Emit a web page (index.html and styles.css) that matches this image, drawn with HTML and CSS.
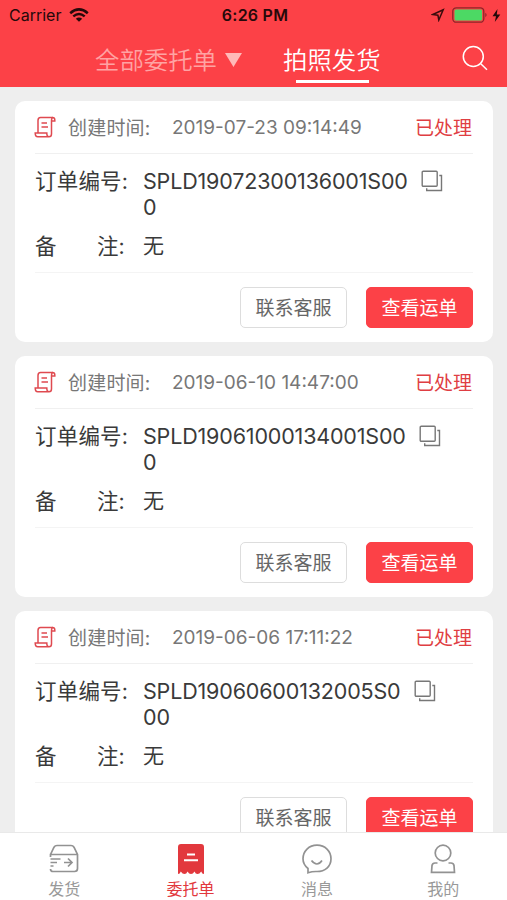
FILE: index.html
```html
<!DOCTYPE html>
<html lang="zh-CN">
<head>
<meta charset="utf-8">
<title>拍照发货</title>
<link rel="stylesheet" href="styles.css">
</head>
<body>
<svg class="defs" width="0" height="0" aria-hidden="true">
  <symbol id="scroll" viewBox="0 0 22 22"><path d="M4 16.500V4.500Q4 1.500 6.500 1.500H18.500Q20.800 1.500 20.800 3.800V5H17.500V18Q17.500 20.800 15 20.800H3.800Q1.200 20.800 1.200 17H12.800Q12.800 20.800 15 20.800M17.500 5Q17.500 1.500 19 1.500M7.500 7H13M7.500 11H14"/></symbol>
  <symbol id="copy" viewBox="0 0 22 22"><rect x="1.200" y="1.200" width="15" height="15" rx="1"/><path d="M18.300 5.500H20.500V20.500H5.700V18.300"/></symbol>
</svg>
<div class="app">
  <header class="top">
    <div class="status">
      <div class="status-left"><span class="carrier">Carrier</span>
        <svg width="20" height="14" viewBox="0 0 20 14"><path d="M1.200 5.200Q10-2.500 18.800 5.200M4.300 8.400Q10 3.600 15.700 8.400" fill="none" stroke="#26090a" stroke-width="2.500"/><path d="M6.800 10.700Q10 8.200 13.200 10.700L10 13.700Z" fill="#26090a"/></svg>
      </div>
      <span class="clock">6:26 PM</span>
      <div class="status-right">
        <svg width="14" height="14" viewBox="0 0 14 14"><path d="M1.800 6.500L12.200 1.800L7.800 12L6.900 7.200Z" fill="none" stroke="#3a0b0c" stroke-width="1.500"/></svg>
        <svg width="36" height="16" viewBox="0 0 36 16"><rect x=".8" y=".8" width="31" height="14.400" rx="3.500" fill="none" stroke="#8d2628" stroke-width="1.300"/><rect x="2.500" y="2.500" width="27.600" height="11" rx="1.500" fill="#4cd964"/><path d="M33.300 5.800Q36 8 33.300 10.200Z" fill="#8d2628"/></svg>
        <svg width="9" height="13" viewBox="0 0 9 13"><path d="M5.500 0L.5 7.200H4L2.800 13L8.300 5.400H4.800Z" fill="#26090a"/></svg>
      </div>
    </div>
    <nav class="nav">
      <span class="nav-item muted">全部委托单<i class="caret"></i></span>
      <span class="nav-item active">拍照发货</span>
      <svg class="search" width="26" height="26" viewBox="0 0 26 26"><circle cx="11.300" cy="11.500" r="10"/><path d="M18.500 18.500L25 24.700"/></svg>
    </nav>
  </header>
  <main class="list">
    <article class="card">
      <div class="card-head"><svg class="scroll"><use href="#scroll"/></svg><span class="created">创建时间:</span><time>2019-07-23 09:14:49</time><b class="state">已处理</b></div>
      <div class="card-body">
        <div class="row order"><span class="label">订单编号:</span><span class="num">SPLD19072300136001S00<br>0</span><svg class="copy"><use href="#copy"/></svg></div>
        <div class="row"><span class="label split"><span>备</span><span>注:</span></span><span class="value">无</span></div>
      </div>
      <div class="actions"><button class="btn">联系客服</button><button class="btn primary">查看运单</button></div>
    </article>
    <article class="card">
      <div class="card-head"><svg class="scroll"><use href="#scroll"/></svg><span class="created">创建时间:</span><time>2019-06-10 14:47:00</time><b class="state">已处理</b></div>
      <div class="card-body">
        <div class="row order"><span class="label">订单编号:</span><span class="num">SPLD19061000134001S00<br>0</span><svg class="copy"><use href="#copy"/></svg></div>
        <div class="row"><span class="label split"><span>备</span><span>注:</span></span><span class="value">无</span></div>
      </div>
      <div class="actions"><button class="btn">联系客服</button><button class="btn primary">查看运单</button></div>
    </article>
    <article class="card">
      <div class="card-head"><svg class="scroll"><use href="#scroll"/></svg><span class="created">创建时间:</span><time>2019-06-06 17:11:22</time><b class="state">已处理</b></div>
      <div class="card-body">
        <div class="row order"><span class="label">订单编号:</span><span class="num">SPLD19060600132005S0<br>00</span><svg class="copy"><use href="#copy"/></svg></div>
        <div class="row"><span class="label split"><span>备</span><span>注:</span></span><span class="value">无</span></div>
      </div>
      <div class="actions"><button class="btn">联系客服</button><button class="btn primary">查看运单</button></div>
    </article>
  </main>
  <footer class="tabs">
    <div class="tab"><svg viewBox="0 0 32 32"><path d="M2.500 11.500L6 4.200Q7 2.500 9 2.500H23Q25 2.500 26 4.200L29.500 11.500V25.500Q29.500 28.500 26.500 28.500H5Q2.500 28.500 2.500 26M2.500 14V11.500H29.500M2.500 16H12.500M2.500 19.500H9M2.500 23H5.500M16 19.500H23.500M20 15.500L24 19.500L20 23.500"/></svg><span>发货</span></div>
    <div class="tab on"><svg viewBox="0 0 32 32"><path class="solid" d="M3 4Q3 1 6 1H26Q29 1 29 4V31Q27 31 26.200 28.500Q24.500 31 22.500 31Q20.500 31 19.500 28.500Q18 31 16 31Q14 31 12.500 28.500Q11.500 31 9.500 31Q7.500 31 5.800 28.500Q5 31 3 31Z"/><path class="cut" d="M12 11.500H20M9 17.300H23"/></svg><span>委托单</span></div>
    <div class="tab"><svg viewBox="0 0 32 32"><path d="M7 29.800V25.500Q2 21.500 2 15.800C2 8 8 2.200 16 2.200S30 8 30 15.800S24 28.500 16 28.500Q11.500 28.300 7 29.800ZM10.500 17.500Q16 24.500 21 17.500"/></svg><span>消息</span></div>
    <div class="tab"><svg viewBox="0 0 32 32"><circle cx="16" cy="10" r="7.800"/><path d="M10.500 20H8Q5.500 20 5 22.500L4.500 29.300H27.500L27 22.500Q26.500 20 24 20H21.500"/></svg><span>我的</span></div>
  </footer>
</div>
</body>
</html>
```
FILE: styles.css
```css
* { box-sizing: border-box; }
body { margin: 0; background: #eee; font-family: Inter, "Noto Sans CJK SC", sans-serif; color: #3a3a3a; }
svg { display: block; flex: none; }
.defs { position: absolute; }
.app { width: 507px; height: 900px; display: flex; flex-direction: column; overflow: hidden; }
.top { height: 87px; flex: none; background: #fc4147; }
.status { height: 30px; display: grid; grid-template-columns: 1fr auto 1fr; align-items: center; padding: 0 6px 0 9px; color: #26090a; font-size: 16px; }
.status-left, .status-right { display: flex; align-items: center; }
.status-left { gap: 8px; }
.status-right { justify-content: flex-end; gap: 4px; }
.status-right svg:first-child { margin-right: 3px; }
.clock { font-weight: 600; letter-spacing: .25px; }
.nav { height: 57px; display: flex; padding: 0 19px 0 95px; color: #fff; font-size: 24.4px; font-weight: 350; }
.nav-item { height: 54px; line-height: 60px; white-space: nowrap; display: flex; }
.muted { color: #ffa3a3; width: 188px; }
.caret { width: 17px; height: 14px; margin: 23px 0 0 8px; background: #ffb9b8; clip-path: polygon(0 0, 100% 0, 50% 100%); }
.active { position: relative; }
.active::after { content: ""; position: absolute; left: 13px; bottom: 1px; width: 73px; height: 3px; background: #fff; }
.search { margin: 15px 0 0 auto; fill: none; stroke: #fff; stroke-width: 1.500; }
.list { flex: 1; min-height: 0; overflow: hidden; padding: 14px 14px 0 15px; display: flex; flex-direction: column; gap: 14px; }
.card { height: 241px; flex: none; background: #fff; border-radius: 10px; padding: 0 20px; }
.card-head { height: 53px; border-bottom: 1px solid #f0f0f0; display: flex; align-items: center; font-size: 19px; color: #777; white-space: nowrap; }
.scroll { width: 22px; height: 22px; margin: 0 12px 0 -1px; fill: none; stroke: #df4a50; stroke-width: 1.500; }
.created { width: 104px; letter-spacing: .2px; padding-bottom: 2px; }
.state { margin-left: auto; margin-right: 1px; padding-bottom: 2px; font-weight: 400; color: #df3e43; }
.card-body { height: 119px; padding-top: 14px; border-bottom: 1px solid #f4f4f4; font-size: 21.500px; }
.row { display: flex; line-height: 26px; white-space: nowrap; }
.order { height: 65px; }
.label { width: 108px; flex: none; letter-spacing: .2px; }
.num { letter-spacing: -.17px; }
.value { font-size: 21px; }
.split { display: flex; justify-content: space-between; padding-right: 18px; }
.copy { width: 22px; height: 22px; margin: 2px 0 0 13px; fill: none; stroke: #777; stroke-width: 1.400; }
.actions { display: flex; justify-content: flex-end; gap: 19px; padding-top: 14px; }
.btn { width: 107px; height: 41px; padding: 0 0 2px; border: 1px solid #ddd; border-radius: 5px; background: #fff; color: #666; font: 19px Inter, "Noto Sans CJK SC", sans-serif; }
.primary { background: #fc4147; border-color: #fc4147; color: #fff; }
.tabs { height: 68px; flex: none; border-top: 1px solid #e9e9e9; background: #fff; padding-left: 1px; display: grid; grid-template-columns: repeat(4, 126.400px); color: #999; font-size: 16px; }
.tab { display: flex; flex-direction: column; align-items: center; padding-top: 10px; line-height: 24px; gap: 2px; }
.tab svg { width: 32px; height: 32px; fill: none; stroke: #929292; stroke-width: 1.700; }
.on { color: #e2383d; }
.on .solid { fill: #e2383d; stroke: none; }
.on .cut { stroke: #fff; stroke-width: 2; }
```
